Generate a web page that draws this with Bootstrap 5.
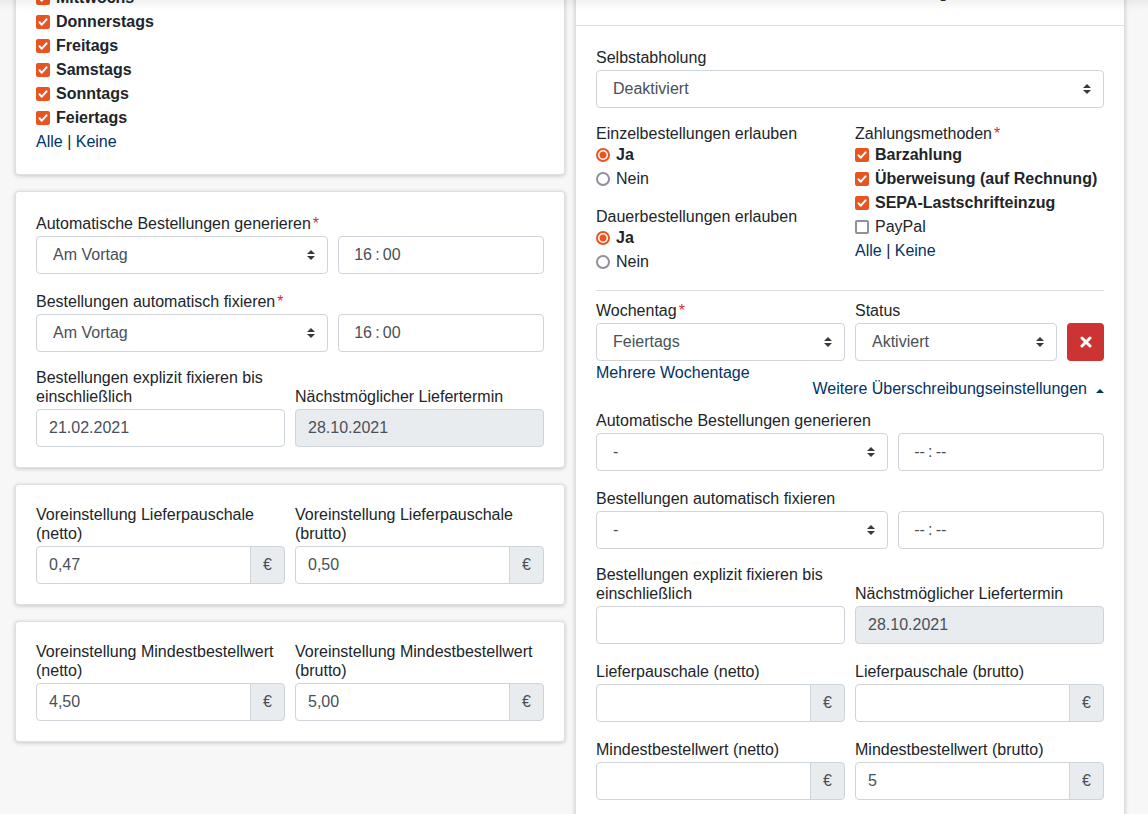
<!DOCTYPE html>
<html lang="de">
<head>
<meta charset="utf-8">
<meta name="viewport" content="width=device-width, initial-scale=1">
<title>Liefereinstellungen</title>
<link href="https://cdn.jsdelivr.net/npm/bootstrap@5.3.0/dist/css/bootstrap.min.css" rel="stylesheet">
<style>
  body { font-family: "Liberation Sans", Arial, sans-serif; font-size: 16px; line-height: 24px; color: #212529; background: #f7f7f7; }
  a { color: #003366; text-decoration: none; }
  a:hover { text-decoration: underline; }

  /* The settings are shown scrolled below the sticky page header */
  .viewport { position: relative; }
  .header-shadow { position: absolute; inset: 0 0 auto 0; height: 10px; background: linear-gradient(rgba(0,0,0,.05), rgba(0,0,0,0)); pointer-events: none; }
  .settings { margin-top: -40px; padding: 0 23px 0 15px; display: grid; grid-template-columns: 1fr 1fr; gap: 10px; align-items: start; }

  .card { border: 1px solid rgba(0,0,0,.125); border-radius: 4px; box-shadow: 0 1px 4px rgba(0,0,0,.2); }
  .card-body { padding: 20px; }
  .days-body { padding-top: 25px; }
  .card-header { padding: 20px; background: #fff; border-color: #dfdfdf; }
  .row { --bs-gutter-x: 10px; }

  .form-label { display: inline-block; margin: 0; line-height: 19px; }
  .group-title { display: block; float: none; margin: 0; font-size: 16px; line-height: 19px; }
  .required { color: #cc3333; margin-left: 2px; }

  .form-control, .form-select, .input-group-text { height: 38px; font-size: 16px; line-height: 24px; color: #495057; border: 1px solid #ced4da; border-radius: 4px; }
  .form-control { padding: 6px 12px; }
  .form-control.time-box { padding-left: 15px; }
  .form-control:disabled, .input-group-text { background: #e9ecef; opacity: 1; }
  .input-group-text { padding: 6px 12px; }
  .form-select { padding: 6px 28px 6px 16px; background: #fff url("data:image/svg+xml,%3csvg xmlns='http://www.w3.org/2000/svg' width='8' height='10' viewBox='0 0 8 10'%3e%3cpath fill='%23343a40' d='M4 0L0 4h8zM4 10L0 6h8z'/%3e%3c/svg%3e") no-repeat right 12px center / 8px 10px; }

  .choice { display: flex; align-items: center; gap: 6px; height: 24px; }
  .choice:has(:checked) { font-weight: bold; }
  .form-check-input { flex: none; width: 14px; height: 14px; margin: 0; border: 2px solid #8f8f9d; background-color: #fff; }
  .form-check-input[type=checkbox] { border-radius: 2px; }
  .form-check-input:checked { border-color: #e95420; }
  .form-check-input:checked[type=checkbox] { background: #e95420 url("data:image/svg+xml,%3csvg xmlns='http://www.w3.org/2000/svg' viewBox='0 0 14 14'%3e%3cpath fill='none' stroke='%23fff' stroke-width='2' stroke-linecap='round' stroke-linejoin='round' d='M3.5 7.3l2.3 2.4 4.8-5.3'/%3e%3c/svg%3e") border-box center / 14px 14px no-repeat; }
  .form-check-input:checked[type=radio] { background: #fff radial-gradient(circle, #e95420 3px, #fff 4px); }

  .divider { margin: 0 0 8px; border-top: 1px solid #dcdcdc; opacity: 1; }
  .btn-remove { flex: none; display: flex; align-items: center; justify-content: center; width: 37px; height: 38px; padding: 0; border-radius: 4px; background: #cc3333; color: #fff; }
  .btn-remove:hover { background: #b32d2d; color: #fff; }
  .caret-up { display: inline-block; margin-left: 9px; border: 4px solid transparent; border-top: 0; border-bottom-color: currentColor; vertical-align: 1px; }
</style>
</head>
<body>
<div class="viewport vh-100 overflow-hidden">
<main class="settings">

  <div class="d-flex flex-column gap-3">
    <section class="card">
      <div class="card-body days-body">
        <label class="choice"><input class="form-check-input" type="checkbox" checked>Mittwochs</label>
        <label class="choice"><input class="form-check-input" type="checkbox" checked>Donnerstags</label>
        <label class="choice"><input class="form-check-input" type="checkbox" checked>Freitags</label>
        <label class="choice"><input class="form-check-input" type="checkbox" checked>Samstags</label>
        <label class="choice"><input class="form-check-input" type="checkbox" checked>Sonntags</label>
        <label class="choice"><input class="form-check-input" type="checkbox" checked>Feiertags</label>
        <div><a href="#">Alle</a> | <a href="#">Keine</a></div>
      </div>
    </section>

    <section class="card">
      <div class="card-body">
        <div class="mb-3">
          <label class="form-label" for="autoGen">Automatische Bestellungen generieren<span class="required">*</span></label>
          <div class="row">
            <div class="col-7"><select class="form-select" id="autoGen"><option>Am Vortag</option></select></div>
            <div class="col-5"><input class="form-control time-box" type="text" value="16&#8201;:&#8201;00" aria-label="Uhrzeit"></div>
          </div>
        </div>
        <div class="mb-3">
          <label class="form-label" for="autoFix">Bestellungen automatisch fixieren<span class="required">*</span></label>
          <div class="row">
            <div class="col-7"><select class="form-select" id="autoFix"><option>Am Vortag</option></select></div>
            <div class="col-5"><input class="form-control time-box" type="text" value="16&#8201;:&#8201;00" aria-label="Uhrzeit"></div>
          </div>
        </div>
        <div class="row align-items-end">
          <div class="col-6">
            <label class="form-label" for="fixUntil">Bestellungen explizit fixieren bis einschließlich</label>
            <input class="form-control" id="fixUntil" type="text" value="21.02.2021">
          </div>
          <div class="col-6">
            <label class="form-label" for="nextDate">Nächstmöglicher Liefertermin</label>
            <input class="form-control" id="nextDate" type="text" value="28.10.2021" disabled>
          </div>
        </div>
      </div>
    </section>

    <section class="card">
      <div class="card-body">
        <div class="row">
          <div class="col-6">
            <label class="form-label" for="feeNet">Voreinstellung Lieferpauschale (netto)</label>
            <div class="input-group"><input class="form-control" id="feeNet" type="text" value="0,47"><span class="input-group-text">€</span></div>
          </div>
          <div class="col-6">
            <label class="form-label" for="feeGross">Voreinstellung Lieferpauschale (brutto)</label>
            <div class="input-group"><input class="form-control" id="feeGross" type="text" value="0,50"><span class="input-group-text">€</span></div>
          </div>
        </div>
      </div>
    </section>

    <section class="card">
      <div class="card-body">
        <div class="row">
          <div class="col-6">
            <label class="form-label" for="minNet">Voreinstellung Mindestbestellwert (netto)</label>
            <div class="input-group"><input class="form-control" id="minNet" type="text" value="4,50"><span class="input-group-text">€</span></div>
          </div>
          <div class="col-6">
            <label class="form-label" for="minGross">Voreinstellung Mindestbestellwert (brutto)</label>
            <div class="input-group"><input class="form-control" id="minGross" type="text" value="5,00"><span class="input-group-text">€</span></div>
          </div>
        </div>
      </div>
    </section>
  </div>

  <section class="card">
    <div class="card-header text-center fw-bold">Individuelle Überschreibungen</div>
    <div class="card-body">
      <div class="mb-3">
        <label class="form-label" for="pickup">Selbstabholung</label>
        <select class="form-select" id="pickup"><option>Deaktiviert</option></select>
      </div>

      <div class="row">
        <div class="col-6">
          <fieldset class="mb-3">
            <legend class="group-title">Einzelbestellungen erlauben</legend>
            <label class="choice"><input class="form-check-input" type="radio" name="single" checked>Ja</label>
            <label class="choice"><input class="form-check-input" type="radio" name="single">Nein</label>
          </fieldset>
          <fieldset class="mb-3">
            <legend class="group-title">Dauerbestellungen erlauben</legend>
            <label class="choice"><input class="form-check-input" type="radio" name="standing" checked>Ja</label>
            <label class="choice"><input class="form-check-input" type="radio" name="standing">Nein</label>
          </fieldset>
        </div>
        <div class="col-6">
          <fieldset>
            <legend class="group-title">Zahlungsmethoden<span class="required">*</span></legend>
            <label class="choice"><input class="form-check-input" type="checkbox" checked>Barzahlung</label>
            <label class="choice"><input class="form-check-input" type="checkbox" checked>Überweisung (auf Rechnung)</label>
            <label class="choice"><input class="form-check-input" type="checkbox" checked>SEPA-Lastschrifteinzug</label>
            <label class="choice"><input class="form-check-input" type="checkbox">PayPal</label>
            <div><a href="#">Alle</a> | <a href="#">Keine</a></div>
          </fieldset>
        </div>
      </div>

      <hr class="divider">

      <div class="row">
        <div class="col-6">
          <label class="form-label" for="weekday">Wochentag<span class="required">*</span></label>
          <select class="form-select" id="weekday"><option>Feiertags</option></select>
        </div>
        <div class="col-6">
          <label class="form-label" for="status">Status</label>
          <div class="row flex-nowrap">
            <div class="col"><select class="form-select" id="status"><option>Aktiviert</option></select></div>
            <div class="col-auto">
              <button class="btn btn-remove" type="button" aria-label="Entfernen">
                <svg width="12" height="12" viewBox="0 0 12 12" aria-hidden="true"><path d="M2 2l8 8M10 2l-8 8" stroke="currentColor" stroke-width="3" stroke-linecap="round"/></svg>
              </button>
            </div>
          </div>
        </div>
      </div>
      <div class="d-flex justify-content-between align-items-start mb-2">
        <a href="#">Mehrere Wochentage</a>
        <a href="#" class="pt-3">Weitere Überschreibungseinstellungen<span class="caret-up"></span></a>
      </div>

      <div class="mb-3">
        <label class="form-label" for="ovGen">Automatische Bestellungen generieren</label>
        <div class="row">
          <div class="col-7"><select class="form-select" id="ovGen"><option>-</option></select></div>
          <div class="col-5"><input class="form-control time-box" type="text" value="--&#8201;:&#8201;--" aria-label="Uhrzeit"></div>
        </div>
      </div>
      <div class="mb-3">
        <label class="form-label" for="ovFix">Bestellungen automatisch fixieren</label>
        <div class="row">
          <div class="col-7"><select class="form-select" id="ovFix"><option>-</option></select></div>
          <div class="col-5"><input class="form-control time-box" type="text" value="--&#8201;:&#8201;--" aria-label="Uhrzeit"></div>
        </div>
      </div>
      <div class="row align-items-end mb-3">
        <div class="col-6">
          <label class="form-label" for="ovUntil">Bestellungen explizit fixieren bis einschließlich</label>
          <input class="form-control" id="ovUntil" type="text">
        </div>
        <div class="col-6">
          <label class="form-label" for="ovNext">Nächstmöglicher Liefertermin</label>
          <input class="form-control" id="ovNext" type="text" value="28.10.2021" disabled>
        </div>
      </div>
      <div class="row mb-3">
        <div class="col-6">
          <label class="form-label" for="ovFeeNet">Lieferpauschale (netto)</label>
          <div class="input-group"><input class="form-control" id="ovFeeNet" type="text"><span class="input-group-text">€</span></div>
        </div>
        <div class="col-6">
          <label class="form-label" for="ovFeeGross">Lieferpauschale (brutto)</label>
          <div class="input-group"><input class="form-control" id="ovFeeGross" type="text"><span class="input-group-text">€</span></div>
        </div>
      </div>
      <div class="row">
        <div class="col-6">
          <label class="form-label" for="ovMinNet">Mindestbestellwert (netto)</label>
          <div class="input-group"><input class="form-control" id="ovMinNet" type="text"><span class="input-group-text">€</span></div>
        </div>
        <div class="col-6">
          <label class="form-label" for="ovMinGross">Mindestbestellwert (brutto)</label>
          <div class="input-group"><input class="form-control" id="ovMinGross" type="text" value="5"><span class="input-group-text">€</span></div>
        </div>
      </div>
    </div>
  </section>

</main>
<div class="header-shadow"></div>
</div>
<script src="https://cdn.jsdelivr.net/npm/bootstrap@5.3.0/dist/js/bootstrap.bundle.min.js"></script>
</body>
</html>
